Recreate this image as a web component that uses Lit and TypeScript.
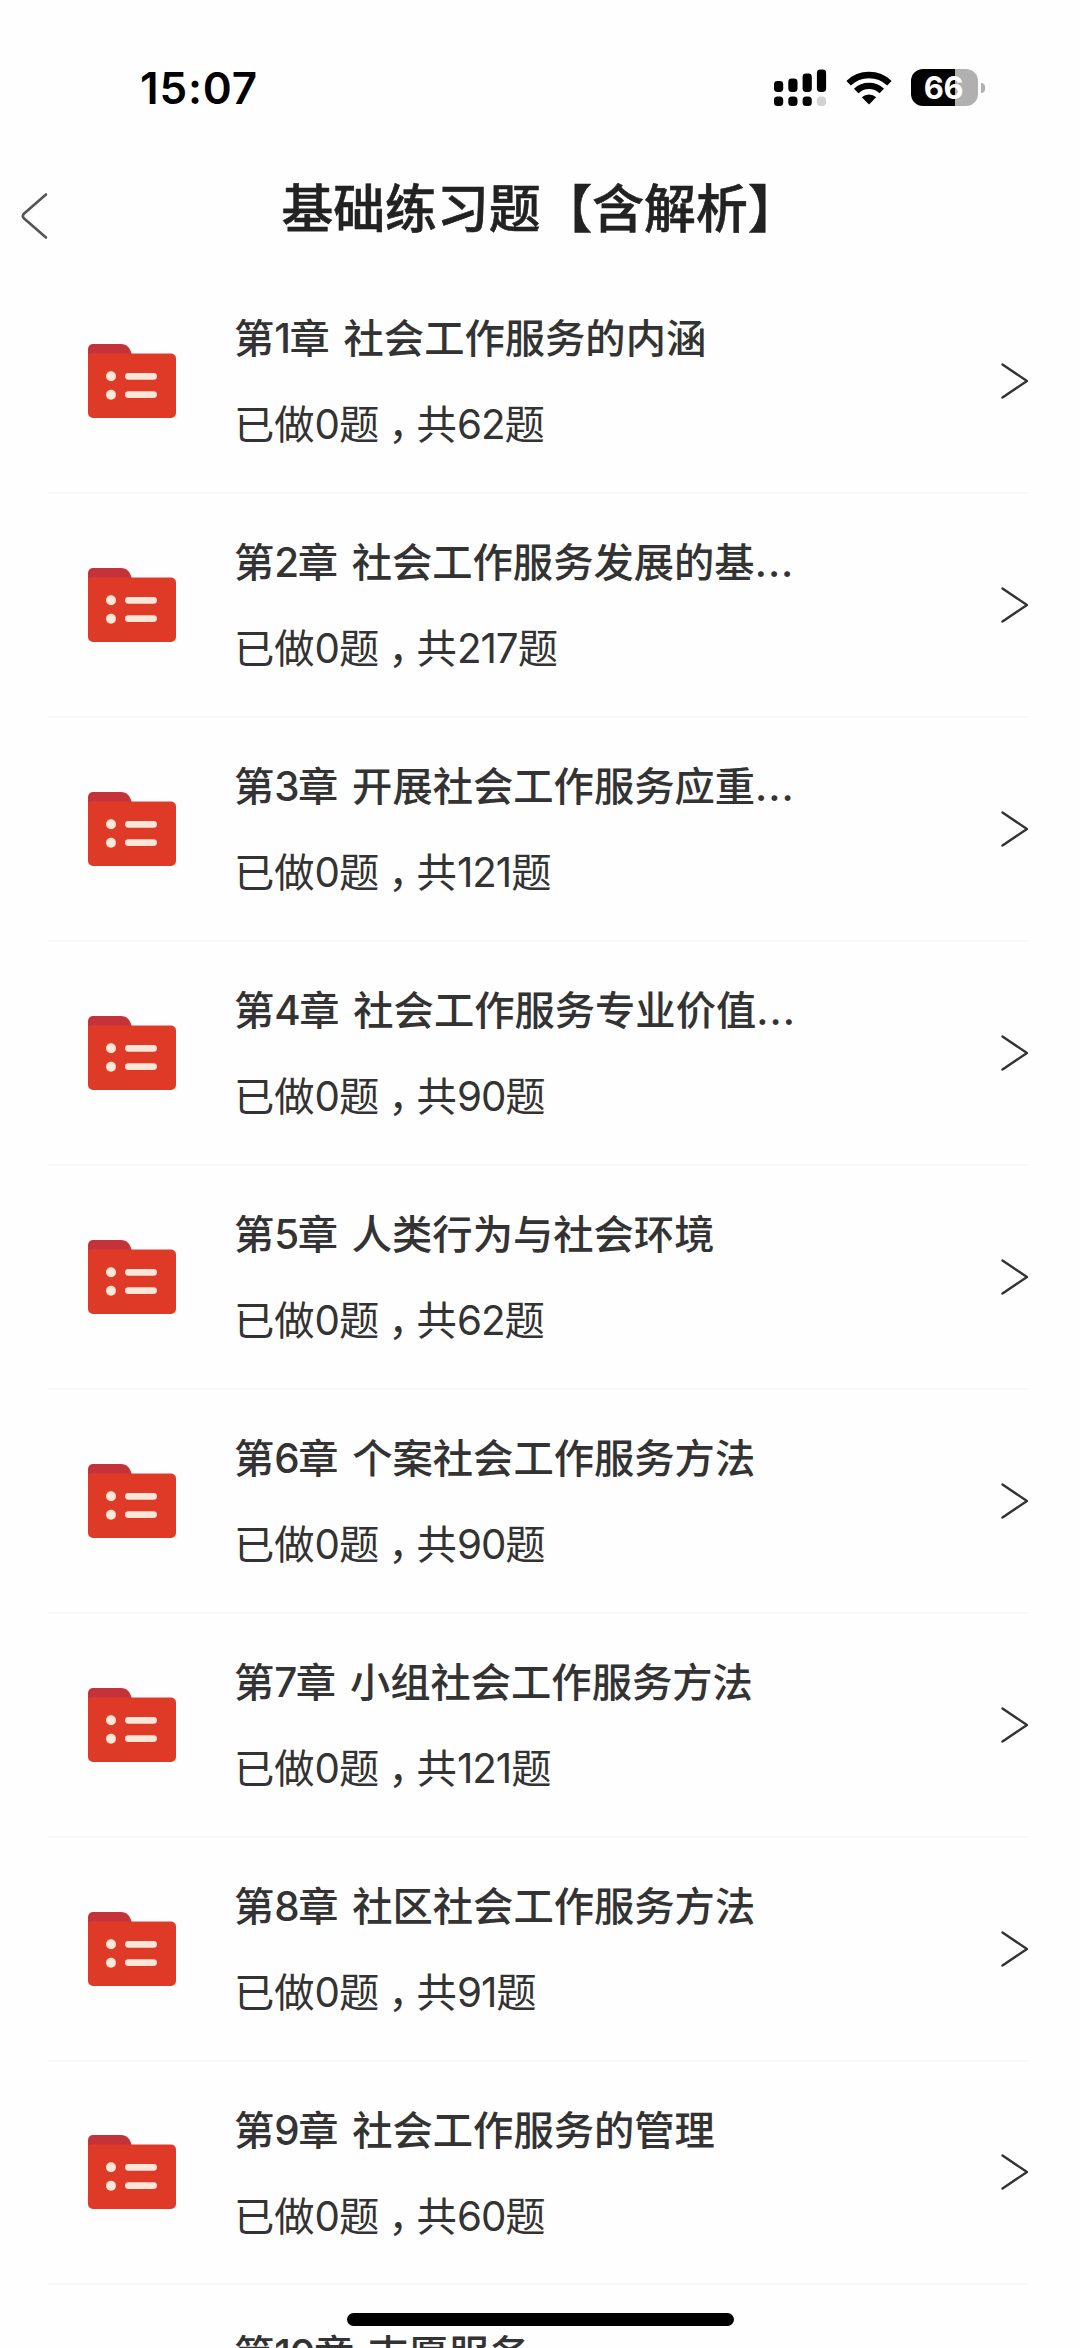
import { LitElement, html, css, svg } from "lit";
import { customElement, property } from "lit/decorators.js";

interface Chapter {
  index: number;
  name: string;
  clipped?: boolean;
  done: number;
  total: number;
}

const CHAPTERS: Chapter[] = [
  { index: 1, name: "社会工作服务的内涵", done: 0, total: 62 },
  { index: 2, name: "社会工作服务发展的基", clipped: true, done: 0, total: 217 },
  { index: 3, name: "开展社会工作服务应重", clipped: true, done: 0, total: 121 },
  { index: 4, name: "社会工作服务专业价值", clipped: true, done: 0, total: 90 },
  { index: 5, name: "人类行为与社会环境", done: 0, total: 62 },
  { index: 6, name: "个案社会工作服务方法", done: 0, total: 90 },
  { index: 7, name: "小组社会工作服务方法", done: 0, total: 121 },
  { index: 8, name: "社区社会工作服务方法", done: 0, total: 91 },
  { index: 9, name: "社会工作服务的管理", done: 0, total: 60 },
  { index: 10, name: "志愿服务", done: 0, total: 60 },
];

@customElement("status-bar")
export class StatusBar extends LitElement {
  static styles = css`
    :host {
      display: flex;
      flex: none;
      align-items: center;
      justify-content: space-between;
      box-sizing: border-box;
      height: 150px;
      padding: 25px 95px 0 140px;
      color: #000;
      font-family: Inter, "Liberation Sans", sans-serif;
    }
    .time {
      font-size: 44px;
      font-weight: 600;
      line-height: 54px;
      letter-spacing: 0.8px;
    }
    .icons {
      display: flex;
      align-items: center;
    }
    .signal { width: 53px; height: 38px; }
    .wifi { width: 46px; height: 38px; margin-left: 19px; }
    .battery {
      display: flex;
      align-items: center;
      gap: 3px;
      margin-left: 19px;
    }
    .cell {
      box-sizing: border-box;
      width: 67px;
      height: 37px;
      padding-right: 2px;
      border-radius: 12px;
      background: linear-gradient(to right, #000 66%, #b0b0b0 66%);
      color: #fff;
      font-size: 31px;
      font-weight: 700;
      line-height: 37px;
      text-align: center;
      letter-spacing: -0.5px;
    }
    .nub {
      width: 4px;
      height: 10px;
      border-radius: 0 4px 4px 0;
      background: #b0b0b0;
    }
  `;

  render() {
    const bars = [
      [0, 12, 11],
      [14.3, 9.5, 13.5],
      [28.6, 4.5, 18.5],
      [42.9, 0.5, 22.5],
    ];
    return html`
      <span class="time">15:07</span>
      <div class="icons">
        <svg class="signal" viewBox="0 0 53 38">
          ${bars.map(
            ([x, y, h], i) => svg`
              <rect x=${x} y=${y} width="9.2" height=${h} rx="3.4"></rect>
              <rect x=${x} y="27.5" width="9.2" height="9.6" rx="3.6" fill=${i === 3 ? "#d2d2d2" : "#000"}></rect>`
          )}
        </svg>
        <svg class="wifi" viewBox="0 0 46 38">
          <path d="M2.6 14.2A29.5 29.5 0 0 1 43.4 14.2" fill="none" stroke="#000" stroke-width="6.4"></path>
          <path d="M10.2 22A18.6 18.6 0 0 1 35.8 22" fill="none" stroke="#000" stroke-width="6.4"></path>
          <path d="M15.8 28.3A10.6 10.6 0 0 1 30.2 28.3L23 35.4Z"></path>
        </svg>
        <div class="battery">
          <div class="cell">66</div>
          <div class="nub"></div>
        </div>
      </div>
    `;
  }
}

@customElement("chapter-row")
export class ChapterRow extends LitElement {
  @property({ attribute: false }) chapter!: Chapter;

  static styles = css`
    :host {
      display: flex;
      align-items: center;
      flex: none;
      box-sizing: border-box;
      height: 223.95px;
      margin: 0 52px 0 48px;
      padding-left: 39px;
      border-bottom: 2px solid #f7f7f7;
      color: #333;
    }
    .folder { flex: none; width: 90px; height: 76px; }
    .text {
      flex: none;
      width: 600px;
      margin: 3px 0 0 57px;
      font-size: 40.3px;
      line-height: 60px;
      white-space: nowrap;
    }
    .title {
      font-weight: 500;
      word-spacing: 3px;
    }
    .index { letter-spacing: -1.5px; }
    .dots { letter-spacing: 1px; }
    .count { margin-top: 26px; }
    .digits { letter-spacing: -1px; }
    .comma { margin-left: 9px; letter-spacing: -12px; }
    .arrow { flex: none; width: 28px; height: 38px; margin-left: auto; }
  `;

  render() {
    const { index, name, clipped, done, total } = this.chapter;
    return html`
      <svg class="folder" viewBox="0 0 90 76">
        <path d="M1 16V6a5 5 0 0 1 5-5H34c6 0 9 4 10.5 9.5V18H1Z" fill="#c4323a"></path>
        <path d="M1 11.5Q2 10.5 5 10.5H84a5 5 0 0 1 5 5V70a5 5 0 0 1-5 5H6a5 5 0 0 1-5-5Z" fill="#df3a27"></path>
        <g fill="#ffe6d8">
          <circle cx="24" cy="33.2" r="5"></circle>
          <circle cx="24" cy="51.7" r="5"></circle>
          <rect x="38" y="29.9" width="32" height="6.8" rx="3.4"></rect>
          <rect x="38" y="48.2" width="32" height="6.8" rx="3.4"></rect>
        </g>
      </svg>
      <div class="text">
        <div class="title">第<span class="index">${index}</span>章 ${name}${clipped ? html`<span class="dots">...</span>` : ""}</div>
        <div class="count">已做<span class="digits">${done}</span>题<span class="comma">，</span>共<span class="digits">${total}</span>题</div>
      </div>
      <svg class="arrow" viewBox="0 0 28 38">
        <path d="M2.5 2.5L27 19L2.5 35.5" fill="none" stroke="#333" stroke-width="2.4" stroke-linecap="round" stroke-linejoin="round"></path>
      </svg>
    `;
  }
}

@customElement("app-root")
export class AppRoot extends LitElement {
  static styles = css`
    :host {
      display: flex;
      flex-direction: column;
      position: relative;
      width: 1080px;
      height: 2348px;
      overflow: hidden;
      background: #fefefe;
      font-family: Inter, "Noto Sans CJK SC", sans-serif;
    }
    .header {
      display: grid;
      flex: none;
      grid-template-columns: 80px 1fr 80px;
      align-items: center;
      height: 120px;
    }
    .back { width: 28px; height: 48px; margin: 12px 0 0 20px; }
    .heading {
      margin: 0 0 9px 1px;
      color: #222;
      font-family: "Noto Sans CJK SC", sans-serif;
      font-size: 51.8px;
      font-weight: 500;
      line-height: 76px;
      text-align: center;
      white-space: nowrap;
      -webkit-text-stroke: 0.6px #222;
    }
    .list { display: flex; flex: none; flex-direction: column; }
    .home {
      position: absolute;
      left: 347px;
      top: 2313px;
      width: 387px;
      height: 13px;
      border-radius: 7px;
      background: #000;
    }
  `;

  render() {
    return html`
      <status-bar></status-bar>
      <div class="header">
        <svg class="back" viewBox="0 0 28 48">
          <path d="M26 2.5L3.6 22Q2 24 3.6 26L26 45.5" fill="none" stroke="#555" stroke-width="2.6" stroke-linecap="round"></path>
        </svg>
        <h1 class="heading">基础练习题【含解析】</h1>
      </div>
      <div class="list">
        ${CHAPTERS.map((c) => html`<chapter-row .chapter=${c}></chapter-row>`)}
      </div>
      <div class="home"></div>
    `;
  }
}
